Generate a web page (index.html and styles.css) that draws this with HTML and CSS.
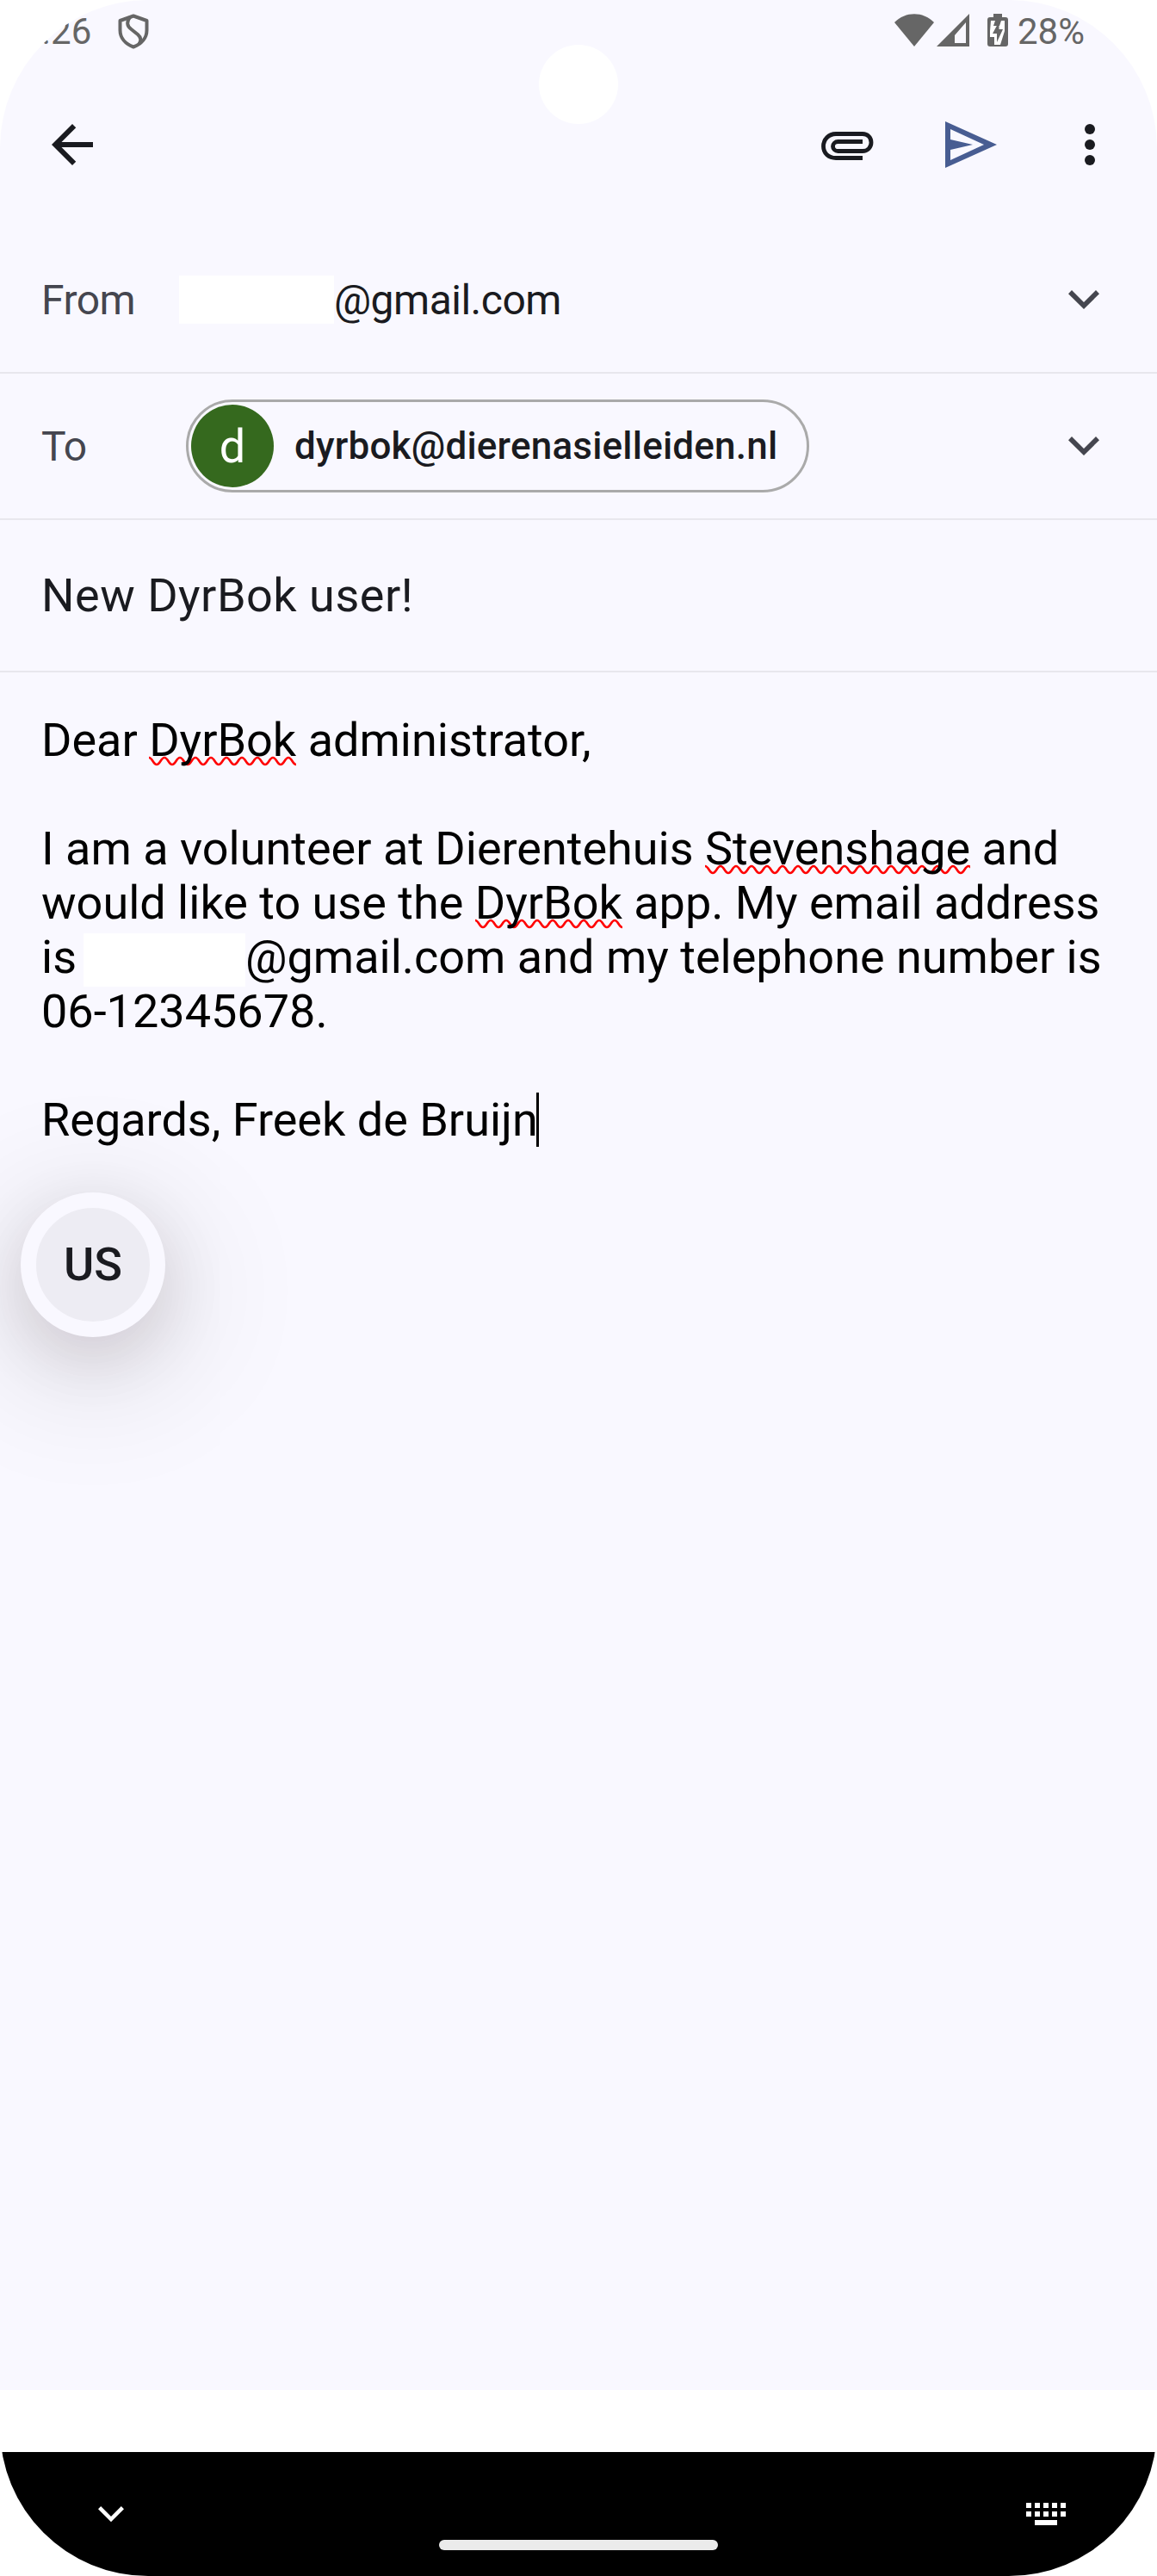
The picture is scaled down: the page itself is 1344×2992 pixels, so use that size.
FILE: index.html
```
<!DOCTYPE html>
<html lang="en">
<head>
<meta charset="utf-8">
<title>Compose</title>
<link rel="stylesheet" href="styles.css">
</head>
<body>
<div class="screen">
  <main class="app">
    <div class="status">
      <div class="status-left">
        <span class="clock">.26</span>
        <svg class="shield" width="36" height="42" viewBox="0 0 36 42" fill="none" stroke="#666" stroke-width="4" stroke-linejoin="round"><path d="M18 2.500L33.500 8V19C33.500 28 27.500 35 18 38.500C8.500 35 2.500 28 2.500 19V8Z"/><path d="M14 4C10 9 10 14 15.500 18L23 24C27.500 28 27 31.500 24.500 35"/></svg>
      </div>
      <div class="status-right">
        <svg class="wifi" width="46" height="38" viewBox="0 0 46 38"><path fill="#666" d="M0 10C13-3 33-3 46 10L23 38Z"/></svg>
        <svg class="signal" width="38" height="38" viewBox="0 0 38 38"><path fill="#666" fill-rule="evenodd" d="M38 0V38H0ZM34 10L21 25V34H34Z"/></svg>
        <svg class="battery" width="24" height="38" viewBox="0 0 24 38"><path fill="#666" d="M7 0H17V4H21Q24 4 24 7V35Q24 38 21 38H3Q0 38 0 35V7Q0 4 3 4H7Z"/><path d="M4 8H9L7 14H14L16 8H20V20L15 36H8V27H3V20Z" fill="#fff"/><path d="M13.500 9L6 23H11V33L18 18H13.500Z" fill="#666"/></svg>
        <span class="percent">28%</span>
      </div>
    </div>
    <header class="toolbar">
      <svg width="48" height="48" viewBox="4 4 16 16" fill="#1a1b20"><path d="M20 11H7.830L13.420 5.410L12 4L4 12L12 20L13.410 18.590L7.830 13H20Z"/></svg>
      <div class="actions">
        <svg class="clip" width="61" height="33" viewBox="0 0 61 33" fill="none" stroke="#1a1b20" stroke-width="4.800"><path d="M48 30.500H17C8.500 30.500 2.500 25 2.500 17S8.500 2.500 17 2.500H48C54 2.500 58 7 58 12.500S54 22.500 48 22.500H19.500C16 22.500 13.500 20 13.500 17S16 11.500 19.500 11.500H48"/></svg>
        <svg class="send" width="60" height="54" viewBox="0 0 60 54"><path fill="#485d92" fill-rule="evenodd" d="M0 0L60 27L0 54ZM6 9V21L32 27L6 33V45L45 27Z"/></svg>
        <svg class="more" width="12" height="48" viewBox="0 0 12 48" fill="#1a1b20"><circle cx="6" cy="6" r="6"/><circle cx="6" cy="24" r="6"/><circle cx="6" cy="42" r="6"/></svg>
      </div>
    </header>
    <section class="row from">
      <span class="label">From</span>
      <span class="redacted"></span>
      <span class="address">@gmail.com</span>
      <svg class="chevron" width="36" height="22" viewBox="0 0 36 22"><path fill="#45464f" d="M4 0L18 14L32 0L36 4.200L18 22L0 4.200Z"/></svg>
    </section>
    <section class="row to">
      <span class="label">To</span>
      <div class="chip"><span class="avatar"><span class="initial">d</span></span><span class="recipient">dyrbok@dierenasielleiden.nl</span></div>
      <svg class="chevron" width="36" height="22" viewBox="0 0 36 22"><path fill="#45464f" d="M4 0L18 14L32 0L36 4.200L18 22L0 4.200Z"/></svg>
    </section>
    <section class="row subject"><span class="subject-text">New DyrBok user!</span></section>
    <section class="message">
      <p><span class="line">Dear <span class="typo">DyrBok</span> administrator,</span></p>
      <p><span class="line">I am a volunteer at Dierentehuis <span class="typo">Stevenshage</span> and</span><br>
      <span class="line">would like to use the <span class="typo">DyrBok</span> app. My email address</span><br>
      <span class="line">is<span class="redacted inline"></span>@gmail.com and my telephone number is</span><br>
      <span class="line">06-12345678.</span></p>
      <p><span class="line">Regards, Freek de Bruijn</span><span class="caret"></span></p>
    </section>
    <div class="locale"><span class="locale-text">US</span></div>
  </main>
  <footer class="nav">
    <svg class="hide" width="30" height="18" viewBox="0 0 30 18" fill="none" stroke="#fff" stroke-width="4.500"><path d="M1.600 1.600L15 15L28.400 1.600"/></svg>
    <span class="home"></span>
    <svg class="keys" width="46" height="26" viewBox="0 0 46 26" fill="#fff"><path d="M0 0h6v6H0zM10 0h6v6h-6zM20 0h6v6h-6zM30 0h6v6h-6zM40 0h6v6h-6zM0 10h6v6H0zM10 10h6v6h-6zM20 10h6v6h-6zM30 10h6v6h-6zM40 10h6v6h-6zM10 20h26v6H10z"/></svg>
  </footer>
  <span class="camera"></span>
</div>
</body>
</html>
```
FILE: styles.css
```
* { box-sizing: border-box; }
body { margin: 0; background: #fff; font-family: Roboto, sans-serif; }
svg { display: block; flex: none; }
.screen { position: relative; width: 1344px; height: 2992px; overflow: hidden; border-radius: 172px; background: #fff; }
.app { height: 2776px; background: #f9f8ff; overflow: hidden; }
.camera { position: absolute; left: 626px; top: 52px; width: 92px; height: 92px; border-radius: 50%; background: #fff; }

.status { height: 72px; display: flex; justify-content: space-between; padding: 16px 84px 0 48px; color: #666; font-size: 42px; line-height: 42px; }
.status-left, .status-right { display: flex; align-items: flex-start; }
.shield { margin-left: 31px; }
.signal { margin-left: 3px; }
.battery { margin: 0 11px 0 21px; }

.toolbar { height: 192px; padding: 0 72px 0 60px; display: flex; align-items: center; justify-content: space-between; }
.actions { display: flex; align-items: center; }
.clip { margin-top: 3px; }
.send { margin: 0 102px 0 83px; }

.row { display: flex; align-items: center; padding: 0 67px 0 48px; border-bottom: 2px solid #e8e7ed; }
.from { height: 170px; }
.to { height: 170px; }
.subject { height: 177px; }
.label { width: 160px; color: #45464f; font-size: 48px; letter-spacing: -0.5px; }
.redacted { width: 180px; height: 56px; background: #fff; }
.address { font-size: 48px; letter-spacing: -0.5px; color: #1a1b20; }
.chevron { margin-left: auto; }
.chip { width: 724px; height: 108px; margin-left: 8px; padding-left: 3px; border: 3px solid #aaa; border-radius: 54px; display: flex; align-items: center; }
.avatar { width: 96px; height: 96px; border-radius: 50%; background: #35691e; color: #fff; font-size: 54px; display: flex; align-items: center; justify-content: center; }
.recipient { margin-left: 24px; font-size: 44px; font-weight: 500; letter-spacing: 0.2px; color: #1a1b20; }
.subject-text { font-size: 54px; letter-spacing: 0.5px; color: #1a1b20; }

.message { padding: 47px 48px 0; font-size: 54px; line-height: 63px; color: #000; white-space: nowrap; }
.message p { margin: 0 0 63px; }
/* 18px-period spelling squiggle */
.typo { background: url("data:image/svg+xml,%3Csvg xmlns='http://www.w3.org/2000/svg' width='18' height='14'%3E%3Cpath d='M-9 11C-5 11-4 3 0 3S5 11 9 11S14 3 18 3S23 11 27 11' fill='none' stroke='red' stroke-width='2.600'/%3E%3C/svg%3E") 0 49px / 18px 14px repeat-x; }
.redacted.inline { display: inline-block; width: 188px; height: 62px; margin: 4px 0 -3px 8px; vertical-align: top; }
.caret { display: inline-block; width: 3px; height: 63px; margin-left: -2px; background: #000; vertical-align: top; }

.locale { width: 168px; height: 168px; margin: -10px 0 0 24px; padding-bottom: 2px; border: 18px solid #f9f8ff; border-radius: 50%; background: #edecf3; display: flex; align-items: center; justify-content: center; font-size: 54px; font-weight: 500; color: #1a1b20; box-shadow: 0 30px 160px 16px rgba(0,0,0,.14), 0 24px 72px rgba(50,10,20,.11); }

.nav { height: 144px; margin-top: 72px; background: #000; padding: 0 106px 0 114px; display: flex; justify-content: space-between; align-items: center; }
.home { width: 324px; height: 12px; border-radius: 6px; background: #ebebeb; margin: 72px 0 0 8px; }
```
